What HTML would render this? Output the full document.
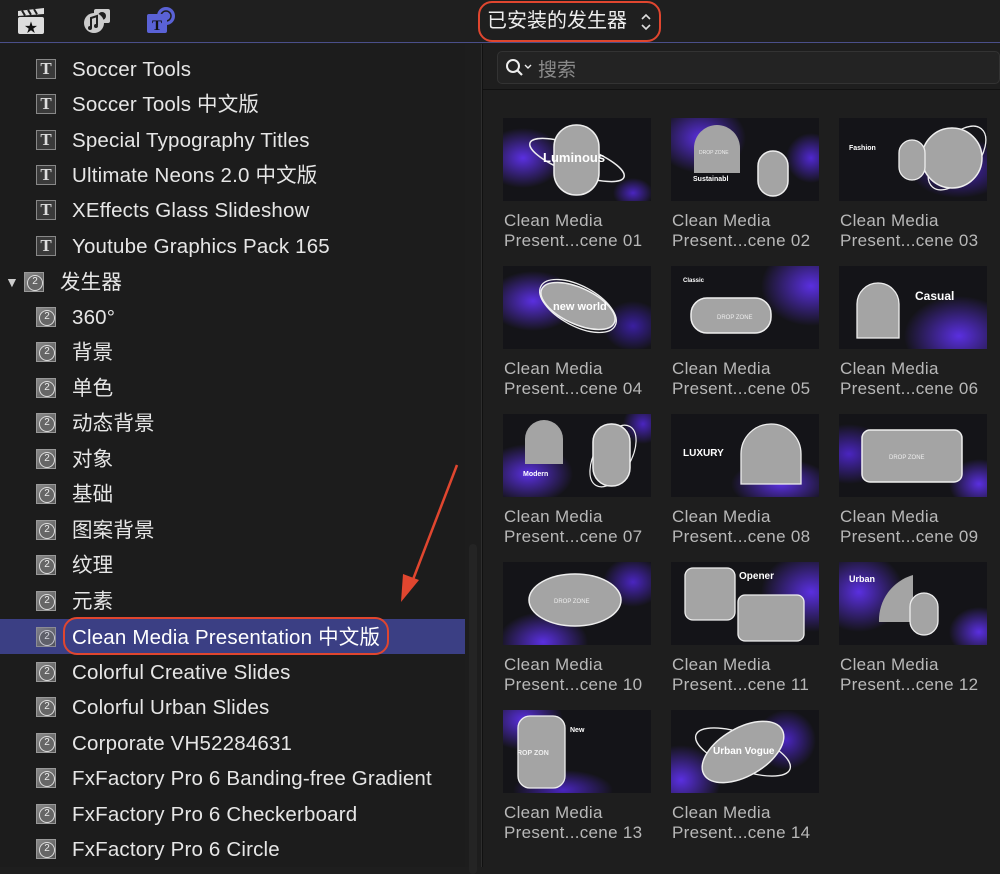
<!DOCTYPE html>
<html><head><meta charset="utf-8"><style>
*{margin:0;padding:0;box-sizing:border-box}
body{width:1000px;height:867px;background:#1e1e1e;font-family:"Liberation Sans","Noto Sans CJK SC",sans-serif;color:#e6e6e6;overflow:hidden;position:relative}
.top{position:absolute;left:0;top:0;width:1000px;height:43px;background:#1f1f1f;border-bottom:1px solid #4a4f8a}
.side{position:absolute;left:0;top:44px;width:465px;height:823px;background:#1c1c1c}
.sb{position:absolute;left:465px;top:44px;width:17px;height:823px;background:#1d1d1d;border-right:1px solid #2e2e2e}
.row{position:absolute;left:0;width:465px;height:35px;font-size:20.5px;line-height:37px;white-space:nowrap;letter-spacing:0.18px}
.row .t{position:absolute;left:72px;top:0}
.ic{position:absolute;left:36px;top:8px;width:20px;height:20px;background:#555;border:1px solid #777;}
.ic.T{background:#3a3a3a;border:1px solid #888;color:#ddd;font-family:"Liberation Serif",serif;font-size:17px;line-height:18px;text-align:center;font-weight:bold;letter-spacing:0}
.ic.g{background:linear-gradient(135deg,#8a8a8a,#555);border:1px solid #999}
.ic.g::after{content:"2";position:absolute;left:2px;top:2px;width:14px;height:14px;border:1.5px solid #ddd;border-radius:50%;font-size:10px;line-height:12px;text-align:center;color:#eee;background:#666;letter-spacing:0}
.sel{background:#3b3f84}
.search{position:absolute;left:497px;top:51px;width:503px;height:33px;background:#232323;border:1px solid #333;border-radius:5px}
.th{position:absolute;width:148px;height:83px;background:#141418;overflow:hidden}
.lb{position:absolute;font-size:17px;line-height:20px;color:#b8b8b8;letter-spacing:.3px;white-space:nowrap}
</style></head><body>
<div class="top">
  <svg style="position:absolute;left:17px;top:8px" width="30" height="28" viewBox="0 0 30 28"><rect x="1" y="9" width="26" height="17" rx="2" fill="#ddd"/><path d="M1 3l26-3v6L1 8z" fill="#ddd"/><path d="M5 2.5l3 5M11 1.8l3 5M17 1.1l3 5" stroke="#1f1f1f" stroke-width="2"/><text x="14" y="24" font-size="13" text-anchor="middle" fill="#111">★</text></svg>
  <svg style="position:absolute;left:82px;top:6px" width="30" height="28" viewBox="0 0 30 28"><rect x="12" y="3" width="16" height="14" rx="2" fill="#ccc"/><circle cx="20" cy="10" r="4" fill="#1f1f1f"/><circle cx="12" cy="17" r="10" fill="#ccc"/><path d="M9 22V12l6-2v9" stroke="#1f1f1f" stroke-width="2" fill="none"/><circle cx="8" cy="22" r="2" fill="#1f1f1f"/><circle cx="14" cy="20" r="2" fill="#1f1f1f"/></svg>
  <svg style="position:absolute;left:146px;top:6px" width="32" height="30" viewBox="0 0 32 30"><circle cx="20" cy="10" r="9" fill="#5a62d6"/><circle cx="20" cy="10" r="5" fill="none" stroke="#1f1f1f" stroke-width="1.5"/><rect x="1" y="8" width="20" height="19" rx="2" fill="#5a62d6"/><text x="11" y="24" font-size="15" font-family="Liberation Serif" text-anchor="middle" fill="#111" font-weight="bold">T</text></svg>
  <div style="position:absolute;left:478px;top:1px;width:183px;height:41px;border:2.5px solid #e0462f;border-radius:14px"></div>
  <div style="position:absolute;left:487px;top:7px;font-size:20px;color:#eee;line-height:28px">已安装的发生器</div>
  <svg style="position:absolute;left:640px;top:12px" width="12" height="20" viewBox="0 0 12 20"><path d="M2 7l4-4 4 4M2 13l4 4 4-4" stroke="#ddd" stroke-width="1.6" fill="none"/></svg>
</div>
<div class="side">
</div>
<div class="sb"><div style="position:absolute;left:4px;top:500px;width:8px;height:330px;background:#242424;border-radius:4px"></div></div>
<div style="position:absolute;left:482px;top:44px;width:1px;height:823px;background:#111"></div>

<div class="row" style="top:51px"><div class="ic T">T</div><span class="t">Soccer Tools</span></div>
<div class="row" style="top:86px"><div class="ic T">T</div><span class="t">Soccer Tools 中文版</span></div>
<div class="row" style="top:122px"><div class="ic T">T</div><span class="t">Special Typography Titles</span></div>
<div class="row" style="top:157px"><div class="ic T">T</div><span class="t">Ultimate Neons 2.0 中文版</span></div>
<div class="row" style="top:192px"><div class="ic T">T</div><span class="t">XEffects Glass Slideshow</span></div>
<div class="row" style="top:228px"><div class="ic T">T</div><span class="t">Youtube Graphics Pack 165</span></div>
<div class="row" style="top:264px"><span style="position:absolute;left:5px;top:0;font-size:14px;color:#ccc">▼</span><div class="ic g" style="left:24px"></div><span class="t" style="left:60px">发生器</span></div>
<div class="row" style="top:299px"><div class="ic g"></div><span class="t">360°</span></div>
<div class="row" style="top:334px"><div class="ic g"></div><span class="t">背景</span></div>
<div class="row" style="top:370px"><div class="ic g"></div><span class="t">单色</span></div>
<div class="row" style="top:405px"><div class="ic g"></div><span class="t">动态背景</span></div>
<div class="row" style="top:441px"><div class="ic g"></div><span class="t">对象</span></div>
<div class="row" style="top:476px"><div class="ic g"></div><span class="t">基础</span></div>
<div class="row" style="top:512px"><div class="ic g"></div><span class="t">图案背景</span></div>
<div class="row" style="top:547px"><div class="ic g"></div><span class="t">纹理</span></div>
<div class="row" style="top:583px"><div class="ic g"></div><span class="t">元素</span></div>
<div class="row sel" style="top:619px"><div class="ic g" style="opacity:.85"></div><span class="t" style="color:#fff">Clean Media Presentation 中文版</span><div style="position:absolute;left:63px;top:-2px;width:326px;height:38px;border:2.5px solid #e0462f;border-radius:14px"></div></div>
<div class="row" style="top:654px"><div class="ic g"></div><span class="t">Colorful Creative Slides</span></div>
<div class="row" style="top:689px"><div class="ic g"></div><span class="t">Colorful Urban Slides</span></div>
<div class="row" style="top:725px"><div class="ic g"></div><span class="t">Corporate VH52284631</span></div>
<div class="row" style="top:760px"><div class="ic g"></div><span class="t">FxFactory Pro 6 Banding-free Gradient</span></div>
<div class="row" style="top:796px"><div class="ic g"></div><span class="t">FxFactory Pro 6 Checkerboard</span></div>
<div class="row" style="top:831px"><div class="ic g"></div><span class="t">FxFactory Pro 6 Circle</span></div>

<svg style="position:absolute;left:395px;top:460px" width="70" height="145" viewBox="0 0 70 145"><path d="M62 5L14 130" stroke="#e0462f" stroke-width="2.5"/><path d="M6 142l2-28 16 6z" fill="#e0462f"/></svg>

<div class="search"><svg style="position:absolute;left:7px;top:6px" width="28" height="20" viewBox="0 0 28 20"><circle cx="8" cy="8" r="6" fill="none" stroke="#eee" stroke-width="2"/><path d="M12 12l5 5" stroke="#eee" stroke-width="2.2"/><path d="M20 7l3 3 3-3" stroke="#eee" stroke-width="1.4" fill="none"/></svg><span style="position:absolute;left:40px;top:3px;font-size:19px;color:#8a8a8a">搜索</span></div>
<div style="position:absolute;left:483px;top:89px;width:517px;height:1px;background:#111"></div>

<div class="th" style="left:503px;top:118px;background:radial-gradient(ellipse 40px 30px at 20px 40px,#5a2fe0,transparent),radial-gradient(ellipse 20px 15px at 130px 75px,#4a25c0,transparent),#141418"><svg width="148" height="83"><ellipse cx="74" cy="42" rx="50" ry="14" transform="rotate(20 74 42)" fill="none" stroke="#eee" stroke-width="1.5"/><rect x="51" y="7" width="45" height="70" rx="22" fill="#a4a4a4" stroke="#eee" stroke-width="1.5"/><text x="40" y="44" font-size="13" font-weight="bold" fill="#fff">Luminous</text></svg></div>
<div class="th" style="left:671px;top:118px;background:radial-gradient(ellipse 45px 35px at 30px 20px,#5a2fe0,transparent),radial-gradient(ellipse 25px 25px at 140px 40px,#5028d0,transparent),#141418"><svg width="148" height="83"><path d="M23 55V30a23 23 0 0 1 46 0v25z" fill="#a4a4a4"/><text x="28" y="36" font-size="5" fill="#eee">DROP ZONE</text><rect x="87" y="33" width="30" height="45" rx="15" fill="#a4a4a4" stroke="#eee" stroke-width="1.5"/><text x="22" y="63" font-size="7" font-weight="bold" fill="#fff">Sustainabl</text></svg></div>
<div class="th" style="left:839px;top:118px;background:radial-gradient(ellipse 50px 30px at 120px 50px,#4a25c0,transparent),#141418"><svg width="148" height="83"><ellipse cx="118" cy="40" rx="20" ry="38" transform="rotate(40 118 40)" fill="none" stroke="#eee" stroke-width="1.3"/><circle cx="113" cy="40" r="30" fill="#a4a4a4" stroke="#eee" stroke-width="1.5"/><rect x="60" y="22" width="26" height="40" rx="13" fill="#a4a4a4" stroke="#eee" stroke-width="1.3"/><text x="10" y="32" font-size="7" font-weight="bold" fill="#fff">Fashion</text></svg></div>

<div class="th" style="left:503px;top:266px;background:radial-gradient(ellipse 45px 30px at 30px 35px,#5a2fe0,transparent),radial-gradient(ellipse 30px 25px at 130px 60px,#3a1fa0,transparent),#141418"><svg width="148" height="83"><ellipse cx="75" cy="40" rx="42" ry="20" transform="rotate(28 75 40)" fill="none" stroke="#eee" stroke-width="1.3"/><ellipse cx="75" cy="40" rx="40" ry="18" transform="rotate(25 75 40)" fill="#a4a4a4" stroke="#eee" stroke-width="1.5"/><text x="50" y="44" font-size="11" font-weight="bold" fill="#fff">new world</text></svg></div>
<div class="th" style="left:671px;top:266px;background:radial-gradient(ellipse 50px 40px at 140px 20px,#5a2fe0,transparent),#141418"><svg width="148" height="83"><rect x="20" y="32" width="80" height="35" rx="16" fill="#a4a4a4" stroke="#eee" stroke-width="1.5"/><text x="46" y="53" font-size="6" fill="#eee">DROP ZONE</text><text x="12" y="16" font-size="6" font-weight="bold" fill="#fff">Classic</text></svg></div>
<div class="th" style="left:839px;top:266px;background:radial-gradient(ellipse 55px 40px at 120px 70px,#5a2fe0,transparent),#141418"><svg width="148" height="83"><path d="M18 72V38a21 21 0 0 1 42 0v34z" fill="#a4a4a4" stroke="#eee" stroke-width="1.3"/><text x="76" y="34" font-size="12" font-weight="bold" fill="#fff">Casual</text></svg></div>

<div class="th" style="left:503px;top:414px;background:radial-gradient(ellipse 45px 30px at 25px 60px,#5a2fe0,transparent),radial-gradient(ellipse 20px 20px at 140px 10px,#4a25c0,transparent),#141418"><svg width="148" height="83"><path d="M22 50V25a19 19 0 0 1 38 0v25z" fill="#a4a4a4"/><ellipse cx="110" cy="42" rx="18" ry="34" transform="rotate(30 110 42)" fill="none" stroke="#eee" stroke-width="1.2"/><rect x="90" y="10" width="37" height="62" rx="18" fill="#a4a4a4" stroke="#eee" stroke-width="1.5"/><text x="20" y="62" font-size="7" font-weight="bold" fill="#fff">Modern</text></svg></div>
<div class="th" style="left:671px;top:414px;background:radial-gradient(ellipse 50px 25px at 110px 70px,#5a2fe0,transparent),#141418"><svg width="148" height="83"><path d="M70 70V40a30 30 0 0 1 60 0v30z" fill="#a4a4a4" stroke="#eee" stroke-width="1.3"/><text x="12" y="42" font-size="10" font-weight="bold" fill="#fff">LUXURY</text></svg></div>
<div class="th" style="left:839px;top:414px;background:radial-gradient(ellipse 40px 30px at 10px 40px,#4a25c0,transparent),radial-gradient(ellipse 30px 25px at 140px 70px,#5a2fe0,transparent),#141418"><svg width="148" height="83"><rect x="23" y="16" width="100" height="52" rx="8" fill="#a4a4a4" stroke="#eee" stroke-width="1.5"/><text x="50" y="45" font-size="6" fill="#eee">DROP ZONE</text></svg></div>

<div class="th" style="left:503px;top:562px;background:radial-gradient(ellipse 45px 30px at 40px 80px,#5a2fe0,transparent),radial-gradient(ellipse 30px 25px at 130px 20px,#4a25c0,transparent),#141418"><svg width="148" height="83"><ellipse cx="72" cy="38" rx="46" ry="26" fill="#a4a4a4" stroke="#eee" stroke-width="1.5"/><text x="51" y="41" font-size="6" fill="#eee">DROP ZONE</text></svg></div>
<div class="th" style="left:671px;top:562px;background:radial-gradient(ellipse 50px 40px at 140px 30px,#5a2fe0,transparent),#141418"><svg width="148" height="83"><rect x="14" y="6" width="50" height="52" rx="8" fill="#a4a4a4" stroke="#eee" stroke-width="1.3"/><rect x="67" y="33" width="66" height="46" rx="7" fill="#a4a4a4" stroke="#eee" stroke-width="1.3"/><text x="68" y="17" font-size="10" font-weight="bold" fill="#fff">Opener</text></svg></div>
<div class="th" style="left:839px;top:562px;background:radial-gradient(ellipse 45px 40px at 20px 30px,#5a2fe0,transparent),radial-gradient(ellipse 30px 25px at 140px 70px,#5a2fe0,transparent),#141418"><svg width="148" height="83"><path d="M40 60A47 47 0 0 1 74 13V60z" fill="#a4a4a4"/><rect x="71" y="31" width="28" height="42" rx="14" fill="#a4a4a4" stroke="#eee" stroke-width="1.3"/><text x="10" y="20" font-size="9" font-weight="bold" fill="#fff">Urban</text></svg></div>

<div class="th" style="left:503px;top:710px;background:radial-gradient(ellipse 40px 30px at 20px 10px,#5a2fe0,transparent),radial-gradient(ellipse 50px 20px at 60px 80px,#4a25c0,transparent),#141418"><svg width="148" height="83"><rect x="15" y="6" width="47" height="72" rx="12" fill="#a4a4a4" stroke="#eee" stroke-width="1.3"/><text x="67" y="22" font-size="7" font-weight="bold" fill="#fff">New</text><text x="14" y="45" font-size="7" font-weight="bold" fill="#eee">ROP ZON</text></svg></div>
<div class="th" style="left:671px;top:710px;background:radial-gradient(ellipse 40px 35px at 10px 70px,#5a2fe0,transparent),radial-gradient(ellipse 30px 30px at 115px 30px,#4a25c0,transparent),#141418"><svg width="148" height="83"><ellipse cx="72" cy="42" rx="50" ry="18" transform="rotate(20 72 42)" fill="none" stroke="#eee" stroke-width="1.3"/><ellipse cx="72" cy="42" rx="45" ry="24" transform="rotate(-30 72 42)" fill="#a4a4a4" stroke="#eee" stroke-width="1.5"/><text x="42" y="44" font-size="10" font-weight="bold" fill="#fff">Urban Vogue</text></svg></div>

<div class="lb" style="left:504px;top:211px">Clean Media<br>Present...cene 01</div>
<div class="lb" style="left:672px;top:211px">Clean Media<br>Present...cene 02</div>
<div class="lb" style="left:840px;top:211px">Clean Media<br>Present...cene 03</div>
<div class="lb" style="left:504px;top:359px">Clean Media<br>Present...cene 04</div>
<div class="lb" style="left:672px;top:359px">Clean Media<br>Present...cene 05</div>
<div class="lb" style="left:840px;top:359px">Clean Media<br>Present...cene 06</div>
<div class="lb" style="left:504px;top:507px">Clean Media<br>Present...cene 07</div>
<div class="lb" style="left:672px;top:507px">Clean Media<br>Present...cene 08</div>
<div class="lb" style="left:840px;top:507px">Clean Media<br>Present...cene 09</div>
<div class="lb" style="left:504px;top:655px">Clean Media<br>Present...cene 10</div>
<div class="lb" style="left:672px;top:655px">Clean Media<br>Present...cene 11</div>
<div class="lb" style="left:840px;top:655px">Clean Media<br>Present...cene 12</div>
<div class="lb" style="left:504px;top:803px">Clean Media<br>Present...cene 13</div>
<div class="lb" style="left:672px;top:803px">Clean Media<br>Present...cene 14</div>
</body></html>
